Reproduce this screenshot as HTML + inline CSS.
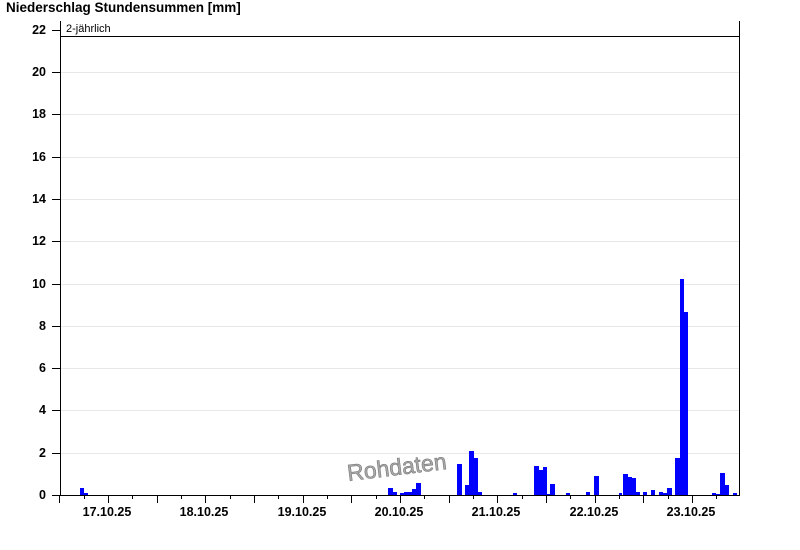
<!DOCTYPE html>
<html><head><meta charset="utf-8"><style>
body{margin:0;width:800px;height:550px;background:#fff;position:relative;overflow:hidden;font-family:"Liberation Sans",Arial,sans-serif}
.a{position:absolute}
.t{font-weight:bold;font-size:12px;color:#000}
.g{position:absolute;left:61px;width:678px;height:1px;background:#e8e8e8}
.b{position:absolute;background:#0000ff}
.yl{position:absolute;width:40px;left:6px;text-align:right;font-weight:bold;font-size:12.5px}
.tk{position:absolute;left:52px;width:8px;height:1px;background:#000}
.xt{position:absolute;width:1px;background:#000;top:495px}
.xl{position:absolute;width:80px;text-align:center;font-weight:bold;font-size:12.5px;top:505px}
</style></head><body>
<div class="a t" style="left:6px;top:0px;font-size:13.5px">Niederschlag Stundensummen [mm]</div>
<div class="a" style="left:60px;top:21px;width:1px;height:475px;background:#000"></div>
<div class="a" style="left:739px;top:21px;width:1px;height:475px;background:#000"></div>
<div class="a" style="left:60px;top:495px;width:680px;height:1px;background:#000"></div>
<div class="a" style="left:61px;top:36px;width:678px;height:1px;background:#000"></div>
<div class="a" style="left:66px;top:23px;font-size:11px">2-jährlich</div>
<div class="a" style="left:349px;top:460px;font-size:23px;color:#aaa;transform:rotate(-7deg);transform-origin:left bottom;-webkit-text-stroke:0.6px #777">Rohdaten</div>
<div id="c"></div>
<script>
let h='';
for(let v=0;v<=22;v+=2){let y=Math.round(495-v*21.14);
 if(v>0&&v<22)h+=`<div class="g" style="top:${y}px"></div>`;
 h+=`<div class="tk" style="top:${y}px"></div><div class="yl" style="top:${y-7}px">${v}</div>`;}
const bars=[[80,4,7],[84,4,2],[388,5,7],[393,4,3],[400,4,2],[404,8,3],[412,4,6],[416,5,12],[457,5,31],[465,4,10],[469,5,44],[474,4,37],[478,4,3],[513,4,2],[534,5,29],[539,4,25],[543,4,28],[547,3,1],[550,5,11],[566,4,2],[586,4,3],[594,5,19],[619,3,2],[623,5,21],[628,4,18],[632,4,17],[636,4,3],[643,4,3],[651,4,5],[659,4,3],[663,4,2],[667,5,7],[675,5,37],[680,4,216],[684,4,183],[712,4,2],[716,4,1],[720,5,22],[725,4,10],[733,4,2]];
for(const [x,w,ht] of bars)h+=`<div class="b" style="left:${x}px;width:${w}px;top:${495-ht}px;height:${ht}px"></div>`;
const days=['17.10.25','18.10.25','19.10.25','20.10.25','21.10.25','22.10.25','23.10.25'];
for(let i=0;i<7;i++){const cx=108+i*97.3;
 h+=`<div class="xl" style="left:${Math.round(cx-41)}px">${days[i]}</div>`;
 h+=`<div class="xt" style="left:${Math.round(cx)}px;height:8px"></div>`;
 h+=`<div class="xt" style="left:${Math.round(cx-48.6)}px;height:8px"></div>`;
 h+=`<div class="xt" style="left:${Math.round(cx+24.3)}px;height:4px"></div>`;
 h+=`<div class="xt" style="left:${Math.round(cx-24.3)}px;height:4px"></div>`;}
document.getElementById('c').innerHTML=h;
</script>
</body></html>
